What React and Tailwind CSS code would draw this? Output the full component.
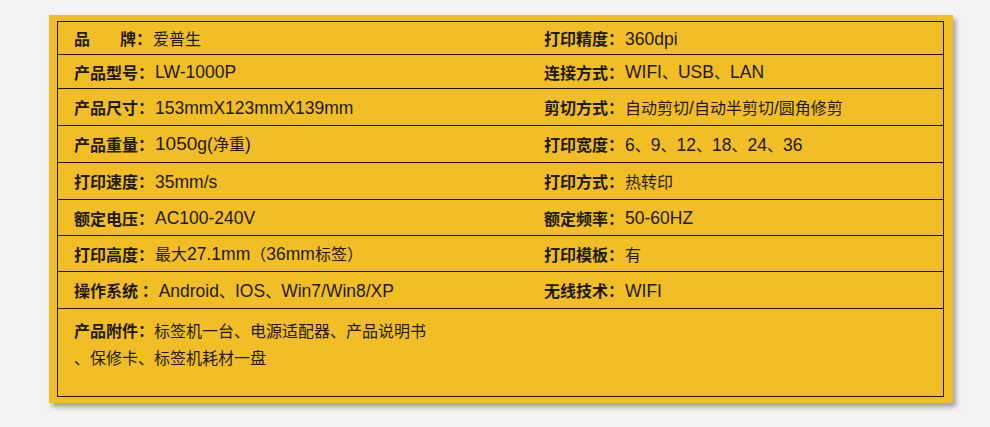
const rows = [
  { h: 'h-[33px]', left: ['品牌', '爱普生'], right: ['打印精度', '360dpi'] },
  { h: 'h-[34px]', left: ['产品型号', 'LW-1000P'], right: ['连接方式', 'WIFI、USB、LAN'] },
  { h: 'h-[37px]', left: ['产品尺寸', '153mmX123mmX139mm'], right: ['剪切方式', '自动剪切/自动半剪切/圆角修剪'] },
  { h: 'h-[37px]', left: ['产品重量', '1050g(净重)'], right: ['打印宽度', '6、9、12、18、24、36'] },
  { h: 'h-[37px]', left: ['打印速度', '35mm/s'], right: ['打印方式', '热转印'] },
  { h: 'h-[36px]', left: ['额定电压', 'AC100-240V'], right: ['额定频率', '50-60HZ'] },
  { h: 'h-[36px]', left: ['打印高度', '最大27.1mm（36mm标签）'], right: ['打印模板', '有'] },
  { h: 'h-[37px]', left: ['操作系统', 'Android、IOS、Win7/Win8/XP'], right: ['无线技术', 'WIFI'] },
];

// latin runs are drawn a bit larger than the CJK text, like the original artwork
function Value({ text }) {
  const parts = text.split(/([A-Za-z0-9.\-\/()]+)/);
  return parts.map((p, i) => {
    if (!p) return null;
    if (/^[A-Za-z0-9.\-\/()]+$/.test(p)) {
      if (p.startsWith('1050')) {
        return (
          <span key={i} className="font-['Liberation_Sans',sans-serif]">
            <span className="text-[19px]">1050</span>
            <span className="text-[17.5px]">{p.slice(4)}</span>
          </span>
        );
      }
      return (
        <span key={i} className="text-[17.5px] font-['Liberation_Sans',sans-serif]">{p}</span>
      );
    }
    return <span key={i}>{p}</span>;
  });
}

function Label({ name }) {
  if (name === '品牌') {
    return (
      <span className="font-bold">
        品<span className="ml-[30px]">牌：</span>
      </span>
    );
  }
  if (name === '操作系统') {
    return <span className="font-bold">操作系统 ：</span>;
  }
  return <span className="font-bold">{name}：</span>;
}

function Cell({ item }) {
  return (
    <div className="flex items-center pl-4 leading-[20px] whitespace-nowrap">
      <Label name={item[0]} />
      <span className="ml-[1px]">
        <Value text={item[1]} />
      </span>
    </div>
  );
}

export default function App() {
  return (
    <div className="min-h-[427px] bg-[#f3f3f6] pt-[15px] pl-[49px] font-['Noto_Sans_CJK_SC',sans-serif] text-[16px] text-[#1e1806]">
      <div className="w-[904px] h-[388px] bg-[#f1bf25] pt-[6px] pl-[8px] pr-[9px] pb-[6px] shadow-[3px_4px_5px_rgba(0,0,0,0.35)]">
        <div className="h-[376px] border border-[#1a1305] flex flex-col">
          {rows.map((r, i) => (
            <div key={i} className={`${r.h} grid grid-cols-[470px_1fr] border-b border-[#1a1305]`}>
              <Cell item={r.left} />
              <Cell item={r.right} />
            </div>
          ))}
          <div className="flex-1 pl-4 pt-[8px] leading-[27px] whitespace-nowrap">
            <div>
              <span className="font-bold">产品附件：</span>
              标签机一台、电源适配器、产品说明书
            </div>
            <div>、保修卡、标签机耗材一盘</div>
          </div>
        </div>
      </div>
    </div>
  );
}
